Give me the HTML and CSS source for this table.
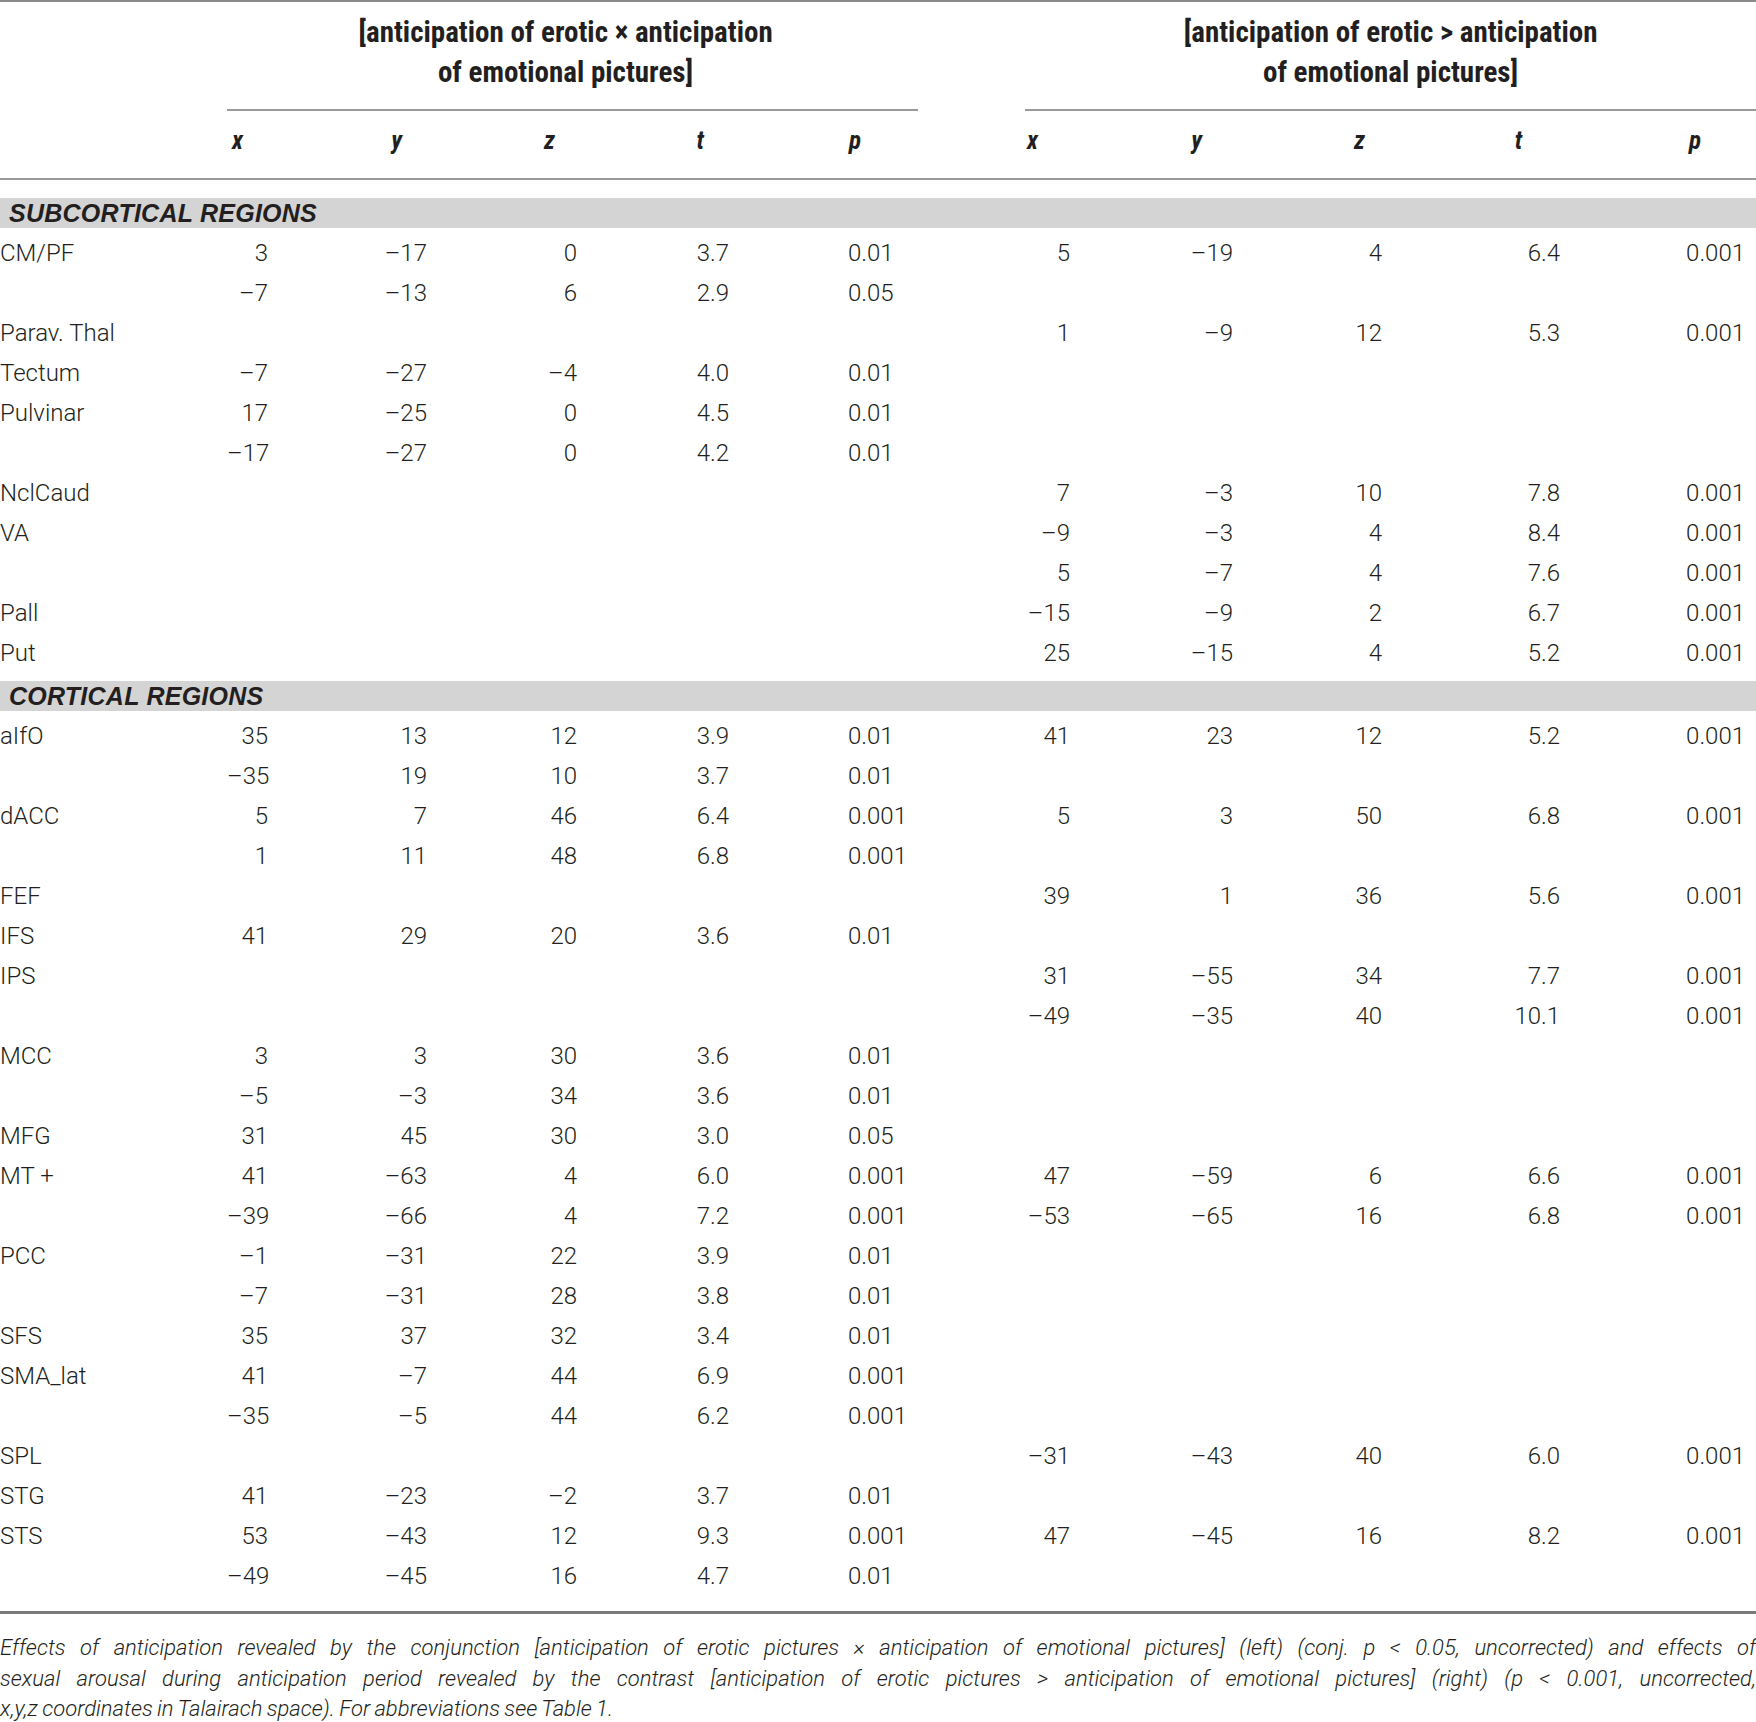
FILE: index.html
```html
<!DOCTYPE html>
<html>
<head>
<meta charset="utf-8">
<link rel="stylesheet" href="styles.css">
</head>
<body>
<div class="page">
<table class="data">
<colgroup>
<col class="w0"><col class="w1"><col class="w2"><col class="w3"><col class="w4"><col class="w5"><col class="w6"><col class="w7"><col class="w8"><col class="w9"><col class="w10"><col class="w11">
</colgroup>
<thead>
<tr class="grp">
<th></th>
<th colspan="5" class="gh gl">[anticipation of erotic × anticipation<br>of emotional pictures]</th>
<th></th>
<th colspan="5" class="gh">[anticipation of erotic &gt; anticipation<br>of emotional pictures]</th>
</tr>
<tr class="cols">
<th></th>
<th class="h">x</th><th class="h">y</th><th class="h hz">z</th><th class="h">t</th><th class="hp">p</th>
<th></th>
<th class="h rx">x</th><th class="h ry">y</th><th class="h rz">z</th><th class="h rt">t</th><th class="hp2">p</th>
</tr>
</thead>
<tbody>
<tr class="bandrow first"><td colspan="12"><div class="band">SUBCORTICAL REGIONS</div></td></tr>
<tr><td>CM/PF</td><td>3</td><td>–17</td><td>0</td><td>3.7</td><td class="p">0.01</td><td></td><td>5</td><td>–19</td><td>4</td><td>6.4</td><td class="p2">0.001</td></tr>
<tr><td></td><td>–7</td><td>–13</td><td>6</td><td>2.9</td><td class="p">0.05</td><td></td><td></td><td></td><td></td><td></td><td class="p2"></td></tr>
<tr><td>Parav. Thal</td><td></td><td></td><td></td><td></td><td class="p"></td><td></td><td>1</td><td>–9</td><td>12</td><td>5.3</td><td class="p2">0.001</td></tr>
<tr><td>Tectum</td><td>–7</td><td>–27</td><td>–4</td><td>4.0</td><td class="p">0.01</td><td></td><td></td><td></td><td></td><td></td><td class="p2"></td></tr>
<tr><td>Pulvinar</td><td>17</td><td>–25</td><td>0</td><td>4.5</td><td class="p">0.01</td><td></td><td></td><td></td><td></td><td></td><td class="p2"></td></tr>
<tr><td></td><td>–17</td><td>–27</td><td>0</td><td>4.2</td><td class="p">0.01</td><td></td><td></td><td></td><td></td><td></td><td class="p2"></td></tr>
<tr><td>NclCaud</td><td></td><td></td><td></td><td></td><td class="p"></td><td></td><td>7</td><td>–3</td><td>10</td><td>7.8</td><td class="p2">0.001</td></tr>
<tr><td>VA</td><td></td><td></td><td></td><td></td><td class="p"></td><td></td><td>–9</td><td>–3</td><td>4</td><td>8.4</td><td class="p2">0.001</td></tr>
<tr><td></td><td></td><td></td><td></td><td></td><td class="p"></td><td></td><td>5</td><td>–7</td><td>4</td><td>7.6</td><td class="p2">0.001</td></tr>
<tr><td>Pall</td><td></td><td></td><td></td><td></td><td class="p"></td><td></td><td>–15</td><td>–9</td><td>2</td><td>6.7</td><td class="p2">0.001</td></tr>
<tr><td>Put</td><td></td><td></td><td></td><td></td><td class="p"></td><td></td><td>25</td><td>–15</td><td>4</td><td>5.2</td><td class="p2">0.001</td></tr>
<tr class="bandrow"><td colspan="12"><div class="band">CORTICAL REGIONS</div></td></tr>
<tr><td>aIfO</td><td>35</td><td>13</td><td>12</td><td>3.9</td><td class="p">0.01</td><td></td><td>41</td><td>23</td><td>12</td><td>5.2</td><td class="p2">0.001</td></tr>
<tr><td></td><td>–35</td><td>19</td><td>10</td><td>3.7</td><td class="p">0.01</td><td></td><td></td><td></td><td></td><td></td><td class="p2"></td></tr>
<tr><td>dACC</td><td>5</td><td>7</td><td>46</td><td>6.4</td><td class="p">0.001</td><td></td><td>5</td><td>3</td><td>50</td><td>6.8</td><td class="p2">0.001</td></tr>
<tr><td></td><td>1</td><td>11</td><td>48</td><td>6.8</td><td class="p">0.001</td><td></td><td></td><td></td><td></td><td></td><td class="p2"></td></tr>
<tr><td>FEF</td><td></td><td></td><td></td><td></td><td class="p"></td><td></td><td>39</td><td>1</td><td>36</td><td>5.6</td><td class="p2">0.001</td></tr>
<tr><td>IFS</td><td>41</td><td>29</td><td>20</td><td>3.6</td><td class="p">0.01</td><td></td><td></td><td></td><td></td><td></td><td class="p2"></td></tr>
<tr><td>IPS</td><td></td><td></td><td></td><td></td><td class="p"></td><td></td><td>31</td><td>–55</td><td>34</td><td>7.7</td><td class="p2">0.001</td></tr>
<tr><td></td><td></td><td></td><td></td><td></td><td class="p"></td><td></td><td>–49</td><td>–35</td><td>40</td><td>10.1</td><td class="p2">0.001</td></tr>
<tr><td>MCC</td><td>3</td><td>3</td><td>30</td><td>3.6</td><td class="p">0.01</td><td></td><td></td><td></td><td></td><td></td><td class="p2"></td></tr>
<tr><td></td><td>–5</td><td>–3</td><td>34</td><td>3.6</td><td class="p">0.01</td><td></td><td></td><td></td><td></td><td></td><td class="p2"></td></tr>
<tr><td>MFG</td><td>31</td><td>45</td><td>30</td><td>3.0</td><td class="p">0.05</td><td></td><td></td><td></td><td></td><td></td><td class="p2"></td></tr>
<tr><td>MT +</td><td>41</td><td>–63</td><td>4</td><td>6.0</td><td class="p">0.001</td><td></td><td>47</td><td>–59</td><td>6</td><td>6.6</td><td class="p2">0.001</td></tr>
<tr><td></td><td>–39</td><td>–66</td><td>4</td><td>7.2</td><td class="p">0.001</td><td></td><td>–53</td><td>–65</td><td>16</td><td>6.8</td><td class="p2">0.001</td></tr>
<tr><td>PCC</td><td>–1</td><td>–31</td><td>22</td><td>3.9</td><td class="p">0.01</td><td></td><td></td><td></td><td></td><td></td><td class="p2"></td></tr>
<tr><td></td><td>–7</td><td>–31</td><td>28</td><td>3.8</td><td class="p">0.01</td><td></td><td></td><td></td><td></td><td></td><td class="p2"></td></tr>
<tr><td>SFS</td><td>35</td><td>37</td><td>32</td><td>3.4</td><td class="p">0.01</td><td></td><td></td><td></td><td></td><td></td><td class="p2"></td></tr>
<tr><td>SMA_lat</td><td>41</td><td>–7</td><td>44</td><td>6.9</td><td class="p">0.001</td><td></td><td></td><td></td><td></td><td></td><td class="p2"></td></tr>
<tr><td></td><td>–35</td><td>–5</td><td>44</td><td>6.2</td><td class="p">0.001</td><td></td><td></td><td></td><td></td><td></td><td class="p2"></td></tr>
<tr><td>SPL</td><td></td><td></td><td></td><td></td><td class="p"></td><td></td><td>–31</td><td>–43</td><td>40</td><td>6.0</td><td class="p2">0.001</td></tr>
<tr><td>STG</td><td>41</td><td>–23</td><td>–2</td><td>3.7</td><td class="p">0.01</td><td></td><td></td><td></td><td></td><td></td><td class="p2"></td></tr>
<tr><td>STS</td><td>53</td><td>–43</td><td>12</td><td>9.3</td><td class="p">0.001</td><td></td><td>47</td><td>–45</td><td>16</td><td>8.2</td><td class="p2">0.001</td></tr>
<tr><td></td><td>–49</td><td>–45</td><td>16</td><td>4.7</td><td class="p">0.01</td><td></td><td></td><td></td><td></td><td></td><td class="p2"></td></tr>
</tbody>
</table>
<div class="caption">
<span class="cl">Effects of anticipation revealed by the conjunction [anticipation of erotic pictures × anticipation of emotional pictures] (left) (conj. p &lt; 0.05, uncorrected) and effects of</span>
<span class="cl">sexual arousal during anticipation period revealed by the contrast [anticipation of erotic pictures &gt; anticipation of emotional pictures] (right) (p &lt; 0.001, uncorrected,</span>
<span class="last">x,y,z coordinates in Talairach space). For abbreviations see Table 1.</span>
</div>
</div>
</body>
</html>
```
FILE: styles.css
```css
html, body {
  margin: 0;
  padding: 0;
  background: #fff;
}
.page {
  width: 1756px;
  color: #231f20;
  font-family: Roboto, "Liberation Sans", sans-serif;
  font-weight: 300;
}
.data {
  width: 1756px;
  table-layout: fixed;
  border-collapse: separate;
  border-spacing: 0;
  border-top: 2px solid #8a8a8a;
  border-bottom: 3px solid #7a7a7a;
  padding-bottom: 15px;
}
.w0 { width: 227px; }
.w1 { width: 51px; }
.w2 { width: 159px; }
.w3 { width: 150px; }
.w4 { width: 152px; }
.w5 { width: 179px; }
.w6 { width: 107px; }
.w7 { width: 55px; }
.w8 { width: 163px; }
.w9 { width: 149px; }
.w10 { width: 178px; }
.w11 { width: 186px; }

th, td {
  padding: 0;
  font-size: 24px;
}
.grp th.gh {
  font-family: "Roboto Condensed", "Liberation Sans Narrow", "Liberation Sans", sans-serif;
  font-stretch: condensed;
  font-weight: 700;
  font-size: 29px;
  line-height: 40px;
  text-align: center;
  padding: 10px 0 17px;
  border-bottom: 2px solid #9a9a9a;
  color: #231f20;
}
.grp th.gl {
  padding-right: 14px;
}
.cols th {
  height: 58px;
  border-bottom: 2px solid #9a9a9a;
  font-family: "Roboto Condensed", "Liberation Sans Narrow", "Liberation Sans", sans-serif;
  font-style: italic;
  font-weight: 700;
  font-size: 25px;
  padding-top: 0;
  padding-bottom: 9px;
}
.cols th.h {
  text-align: right;
  padding-right: 35px;
}
.cols th.hz { padding-right: 32px; }
.cols th.rx { padding-right: 42px; }
.cols th.ry { padding-right: 41px; }
.cols th.rz { padding-right: 27px; }
.cols th.rt { padding-right: 48px; }
.cols th.hp {
  text-align: left;
  padding-left: 110px;
}
.cols th.hp2 {
  text-align: left;
  padding-left: 119px;
}
tbody td {
  height: 40px;
  line-height: 40px;
  text-align: right;
  padding-right: 10px;
  white-space: nowrap;
}
tbody td:first-child {
  text-align: left;
  padding-right: 0;
}
tbody td.p {
  text-align: left;
  padding-left: 109px;
  padding-right: 0;
}
tbody td.p2 {
  text-align: left;
  padding-left: 116px;
  padding-right: 0;
}
.bandrow td {
  height: auto;
  line-height: normal;
  padding: 8px 0 5px;
  text-align: left;
}
.bandrow.first td {
  padding-top: 18px;
}
.band {
  height: 30px;
  line-height: 30px;
  background: #d4d4d4;
  padding-left: 9px;
  font-family: "Liberation Sans", Arial, sans-serif;
  font-style: italic;
  font-weight: 700;
  font-size: 25px;
  letter-spacing: 0.25px;
  color: #231f20;
}
.caption {
  margin-top: 19px;
  font-style: italic;
  font-size: 22px;
  line-height: 30.5px;
  word-spacing: -1px;
}
.caption .cl {
  display: block;
  text-align: justify;
  text-align-last: justify;
}
.caption .last {
  display: block;
}
```
